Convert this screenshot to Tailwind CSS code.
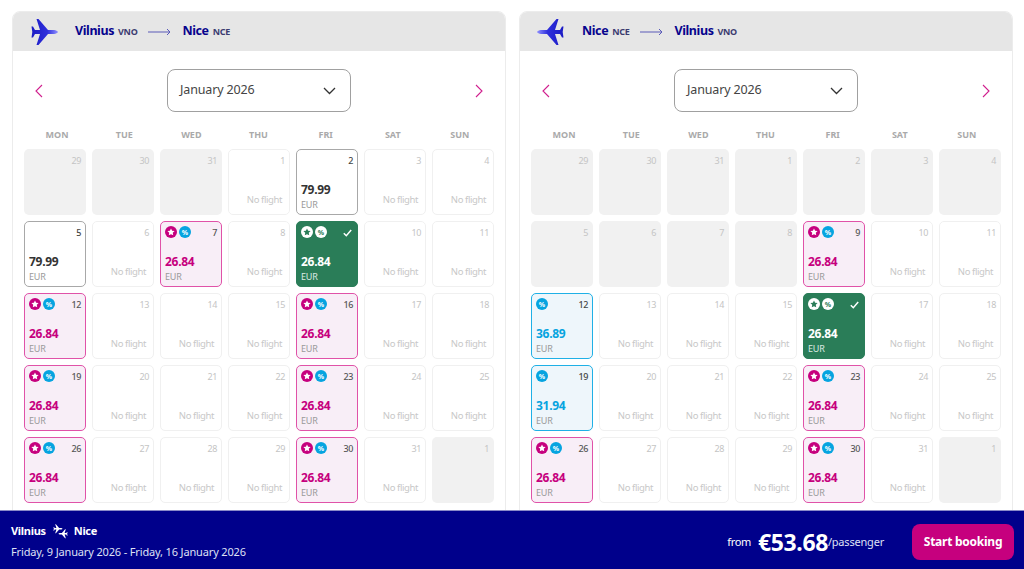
<!DOCTYPE html>
<html lang="en">
<head>
  <meta charset="UTF-8" />
  <title>Select flights</title>
  <script src="https://cdn.jsdelivr.net/npm/@tailwindcss/browser@4"></script>
</head>
<body class="bg-white font-['Noto_Sans','Liberation_Sans',sans-serif] text-[#333]">
  <div class="flex flex-col h-[569px] w-[1024px] overflow-hidden">
    <main class="flex-1 min-h-0 overflow-hidden flex gap-[13px] pt-[11px] pl-[12px] pr-[11px]">
      <section id="out" class="w-[494px] shrink-0 h-[530px] rounded-t-lg border border-[#ececec] overflow-hidden"></section>
      <section id="ret" class="w-[494px] shrink-0 h-[530px] rounded-t-lg border border-[#ececec] overflow-hidden"></section>
    </main>
    <footer class="h-[59px] shrink-0 bg-[#00008b] border-t border-[#8a8ac8] flex items-center justify-between pl-[11px] pr-[10px] text-white">
      <div class="pt-[3px]">
        <div class="flex items-center h-[16px] text-[11px] font-bold tracking-[-0.3px]">
          <span>Vilnius</span>
          <svg class="ml-[7px] mr-[6px] w-[15px] h-[16px]" viewBox="0 0 15 16" fill="#fff">
            <path transform="translate(0 1) scale(.34)" d="M6.500 1H8.500L18 12H24C26 12 27.500 13.200 28 14 27.500 14.800 26 16 24 16H18L8.500 27H6.500L10 16H5L3 19.500H1.500L2.300 14 1.500 8.500H3L5 12H10Z"/>
            <path transform="translate(15 6) scale(-.34 .34)" d="M6.500 1H8.500L18 12H24C26 12 27.500 13.200 28 14 27.500 14.800 26 16 24 16H18L8.500 27H6.500L10 16H5L3 19.500H1.500L2.300 14 1.500 8.500H3L5 12H10Z"/>
          </svg>
          <span>Nice</span>
        </div>
        <div class="mt-[5px] text-[11px] leading-[16px] tracking-[-0.15px] text-[#dfe0f5]">Friday, 9 January 2026 - Friday, 16 January 2026</div>
      </div>
      <div class="flex items-center pt-[4px]">
        <span class="text-[11px] tracking-[-0.3px] mr-[7px]">from</span>
        <span class="text-[23px] tracking-[-0.4px] font-bold leading-none">€53.68</span>
        <span class="text-[11px] tracking-[-0.2px] text-[#dfe0f5]">/passenger</span>
        <button class="ml-[28px] w-[102px] h-[36px] rounded-lg bg-[#c6007e] text-[12px] tracking-[-0.25px] font-bold text-white">Start booking</button>
      </div>
    </footer>
  </div>

  <script>
    const plane = flip => `<svg class="w-[28px] h-[28px] ${flip ? '-scale-x-100' : ''}" viewBox="0 0 28 28"><defs><linearGradient id="pl" x1="0" x2="1" y1="0" y2="0"><stop offset="0" stop-color="#1c1cc4"/><stop offset=".6" stop-color="#2f2fdc"/><stop offset="1" stop-color="#9090ff"/></linearGradient></defs><path fill="url(#pl)" d="M6.500 1H8.500L18 12H24C26 12 27.500 13.200 28 14 27.500 14.800 26 16 24 16H18L8.500 27H6.500L10 16H5L3 19.500H1.500L2.300 14 1.500 8.500H3L5 12H10Z"/></svg>`;
    const star = `<span class="w-[12px] h-[12px] rounded-full flex items-center justify-center CIRC"><svg class="w-[8px] h-[8px]" viewBox="0 0 10 10"><path fill="FILL" d="M5 .5l1.400 2.900 3.100.4-2.300 2.200.6 3.200L5 7.700 2.200 9.200l.6-3.200L.5 3.800l3.100-.4z"/></svg></span>`;
    const pct = `<span class="w-[12px] h-[12px] rounded-full flex items-center justify-center text-[7px] font-bold leading-none CIRC">%</span>`;

    const chev = (pts, cls) => `<svg class="${cls}" viewBox="0 0 8 14" fill="none" stroke="#d0208e" stroke-width="1.100"><path d="${pts}"/></svg>`;

    function badges(b, selected) {
      let s = '';
      if (b.includes('s')) s += selected
        ? star.replace('CIRC', 'bg-white').replace('FILL', '#2a7d58')
        : star.replace('CIRC', 'bg-[#c6007e]').replace('FILL', '#fff');
      if (b.includes('p')) s += pct.replace('CIRC', selected ? 'bg-white text-[#2a7d58]' : 'bg-[#06a4e0] text-white');
      return `<span class="flex gap-[2px]">${s}</span>`;
    }

    function cell(c) {
      if (c.t === 'off')
        return `<div class="h-[66px] rounded-[5px] bg-[#f1f1f1] pt-[5px] pr-[5px] text-right text-[9px] tracking-[-0.4px] leading-[14px] text-[#c4c4c4]">${c.d}</div>`;
      if (c.t === 'none')
        return `<div class="h-[66px] rounded-[5px] border border-[#f0f0f0] bg-white pt-[4px] pr-[4px] text-right text-[9px] tracking-[-0.4px] leading-[14px] text-[#c4c4c4] flex flex-col"><span>${c.d}</span><span class="mt-[25px] mr-[3px] text-[9.500px] tracking-[-0.4px] leading-[14px] text-[#c8c8c8]">No flight</span></div>`;
      const styles = {
        plain: ['border border-[#a8a8a8] bg-white', 'text-[#333]', 'text-[#444]', 'text-[#999]'],
        deal: ['border border-[#e052a8] bg-[#f8eef7]', 'text-[#c6007e]', 'text-[#555]', 'text-[#999]'],
        blue: ['border border-[#1fb0e6] bg-[#eef6fb]', 'text-[#06a4e0]', 'text-[#444]', 'text-[#999]'],
        sel: ['bg-[#2a7d58] border border-[#2a7d58]', 'text-white', 'text-white', 'text-[#dcebe4]']
      }[c.t];
      const corner = c.t === 'sel'
        ? `<svg class="w-[9px] h-[8px] mt-[3px] mr-[1px]" viewBox="0 0 9 8" fill="none" stroke="#fff" stroke-width="1.500"><path d="M.8 4.200l2.500 2.500L8.200 1"/></svg>`
        : `<span class="text-[9px] tracking-[-0.4px] leading-[14px] font-medium ${styles[2]}">${c.d}</span>`;
      return `<div class="h-[66px] rounded-[5px] ${styles[0]} pt-[4px] pb-[3px] pl-[4px] pr-[4px] flex flex-col">
        <div class="flex justify-between h-[14px]">${badges(c.b || '', c.t === 'sel')}${corner}</div>
        <div class="mt-auto text-[12px] tracking-[-0.3px] leading-[15px] font-bold ${styles[1]}">${c.p}</div>
        <div class="mt-[2px] text-[9px] tracking-[-0.2px] leading-[12px] ${styles[3]}">EUR</div>
      </div>`;
    }

    const off = d => ({ t: 'off', d });
    const none = d => ({ t: 'none', d });
    const deal = (d, b = 'sp') => ({ t: 'deal', d, b, p: '26.84' });

    const outDays = [
      off(29), off(30), off(31), none(1), { t: 'plain', d: 2, p: '79.99' }, none(3), none(4),
      { t: 'plain', d: 5, p: '79.99' }, none(6), deal(7), none(8), { t: 'sel', d: 9, b: 'sp', p: '26.84' }, none(10), none(11),
      deal(12), none(13), none(14), none(15), deal(16), none(17), none(18),
      deal(19), none(20), none(21), none(22), deal(23), none(24), none(25),
      deal(26), none(27), none(28), none(29), deal(30), none(31), off(1)
    ];
    const retDays = [
      off(29), off(30), off(31), off(1), off(2), off(3), off(4),
      off(5), off(6), off(7), off(8), deal(9), none(10), none(11),
      { t: 'blue', d: 12, b: 'p', p: '36.89' }, none(13), none(14), none(15), { t: 'sel', d: 16, b: 'sp', p: '26.84' }, none(17), none(18),
      { t: 'blue', d: 19, b: 'p', p: '31.94' }, none(20), none(21), none(22), deal(23), none(24), none(25),
      deal(26), none(27), none(28), none(29), deal(30), none(31), off(1)
    ];

    function render(id, from, fromCode, to, toCode, flip, days) {
      const head = ['MON', 'TUE', 'WED', 'THU', 'FRI', 'SAT', 'SUN']
        .map(d => `<div class="text-center text-[9px] font-bold text-[#aaa]">${d}</div>`).join('');
      document.getElementById(id).innerHTML = `
        <div class="h-[39px] bg-[#e6e6e6] flex items-center pl-[17px]">
          ${plane(flip)}
          <div class="ml-[17px] flex items-baseline text-[12.500px] tracking-[-0.4px] font-bold text-[#06038d]">
            <span>${from}</span><span class="ml-[4px] text-[9px] tracking-[-0.3px] text-[#3c3c70]">${fromCode}</span>
          </div>
          <svg class="mx-[11px] w-[23px] h-[8px]" viewBox="0 0 23 8" fill="none" stroke="#5a5ab8"><path d="M0 4h22M19 1l3 3-3 3"/></svg>
          <div class="flex items-baseline text-[12.500px] tracking-[-0.4px] font-bold text-[#06038d]">
            <span>${to}</span><span class="ml-[4px] text-[9px] tracking-[-0.3px] text-[#3c3c70]">${toCode}</span>
          </div>
        </div>
        <div class="flex items-center justify-between px-[22px] mt-[18px]">
          ${chev('M7 1L1 7l6 6', 'w-[8px] h-[14px]')}
          <div class="w-[184px] h-[43px] rounded-lg border border-[#a0a0a0] flex items-center justify-between pl-[12px] pr-[14px] text-[12.500px] tracking-[-0.15px] text-[#444]">
            <span>January 2026</span>
            <svg class="w-[13px] h-[8px]" viewBox="0 0 13 8" fill="none" stroke="#333" stroke-width="1.300"><path d="M1 1l5.500 5.500L12 1"/></svg>
          </div>
          ${chev('M1 1l6 6-6 6', 'w-[8px] h-[14px]')}
        </div>
        <div class="grid grid-cols-7 gap-x-[5px] pl-[13px] pr-[14px] mt-[16px] mb-[7px] h-[14px] leading-[14px]">${head}</div>
        <div class="grid grid-cols-7 gap-x-[6px] gap-y-[6px] px-[11px]">${days.map(cell).join('')}</div>`;
    }

    render('out', 'Vilnius', 'VNO', 'Nice', 'NCE', false, outDays);
    render('ret', 'Nice', 'NCE', 'Vilnius', 'VNO', true, retDays);
  </script>
</body>
</html>
